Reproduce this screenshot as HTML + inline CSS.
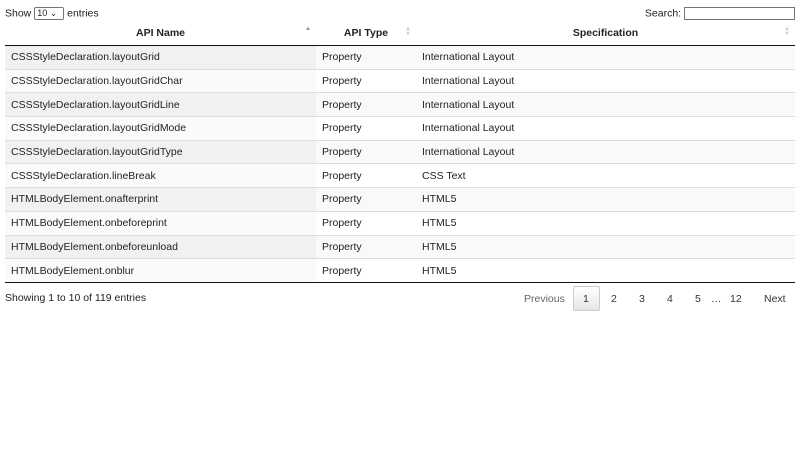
<!DOCTYPE html>
<html><head><style>
body{margin:0;width:800px;height:450px;background:#fff;font-family:"Liberation Sans",sans-serif;font-size:10.5px;color:#222;position:relative}
.a{position:absolute;white-space:nowrap}
table{position:absolute;left:5px;top:21px;width:790px;border-collapse:collapse;table-layout:fixed}
th{height:22px;border-bottom:1px solid #111;font-weight:bold;text-align:center;position:relative;font-size:10.5px}
th span.s{position:absolute;right:5px;top:6px;font-size:6px;color:#ccc;line-height:5px}
td{height:22.7px;padding:0 0 0 6px;border-top:1px solid #ddd}
tr:nth-child(odd) td{background:#f9f9f9}
tr:nth-child(odd) td:first-child{background:#f1f1f1}
tr:nth-child(even) td:first-child{background:#fafafa}
tbody tr:first-child td{border-top:none}
tbody tr:last-child td{border-bottom:1px solid #111}
.p{position:absolute;top:293px;color:#333}
</style></head><body>
<div class="a" style="left:5px;top:7px">Show <span style="display:inline-block;border:1px solid #767676;border-radius:2px;width:26px;height:11px;font-size:9px;line-height:11px;padding-left:2px;vertical-align:middle">10 ⌄</span> entries</div>
<div class="a" style="right:5px;top:7px">Search: <span style="display:inline-block;border:1px solid #767676;width:109px;height:11px;vertical-align:middle"></span></div>
<table>
<colgroup><col style="width:311px"><col style="width:100px"><col></colgroup>
<thead><tr><th>API Name<span class="s" style="color:#8a8ac8">▲</span></th><th>API Type<span class="s">▲<br>▼</span></th><th>Specification<span class="s">▲<br>▼</span></th></tr></thead>
<tbody>
<tr><td>CSSStyleDeclaration.layoutGrid</td><td>Property</td><td>International Layout</td></tr>
<tr><td>CSSStyleDeclaration.layoutGridChar</td><td>Property</td><td>International Layout</td></tr>
<tr><td>CSSStyleDeclaration.layoutGridLine</td><td>Property</td><td>International Layout</td></tr>
<tr><td>CSSStyleDeclaration.layoutGridMode</td><td>Property</td><td>International Layout</td></tr>
<tr><td>CSSStyleDeclaration.layoutGridType</td><td>Property</td><td>International Layout</td></tr>
<tr><td>CSSStyleDeclaration.lineBreak</td><td>Property</td><td>CSS Text</td></tr>
<tr><td>HTMLBodyElement.onafterprint</td><td>Property</td><td>HTML5</td></tr>
<tr><td>HTMLBodyElement.onbeforeprint</td><td>Property</td><td>HTML5</td></tr>
<tr><td>HTMLBodyElement.onbeforeunload</td><td>Property</td><td>HTML5</td></tr>
<tr><td>HTMLBodyElement.onblur</td><td>Property</td><td>HTML5</td></tr>
</tbody></table>
<div class="a" style="left:5px;top:292px">Showing 1 to 10 of 119 entries</div>
<div class="p" style="left:524px;color:#666">Previous</div>
<div class="a" style="left:573px;top:286px;width:25px;height:23px;border:1px solid #ccc;border-radius:2px;background:linear-gradient(#fff,#e6e6e6)"></div>
<div class="p" style="left:583px">1</div>
<div class="p" style="left:611px">2</div>
<div class="p" style="left:639px">3</div>
<div class="p" style="left:667px">4</div>
<div class="p" style="left:695px">5</div>
<div class="p" style="left:711px">…</div>
<div class="p" style="left:730px">12</div>
<div class="p" style="left:764px">Next</div>
</body></html>
